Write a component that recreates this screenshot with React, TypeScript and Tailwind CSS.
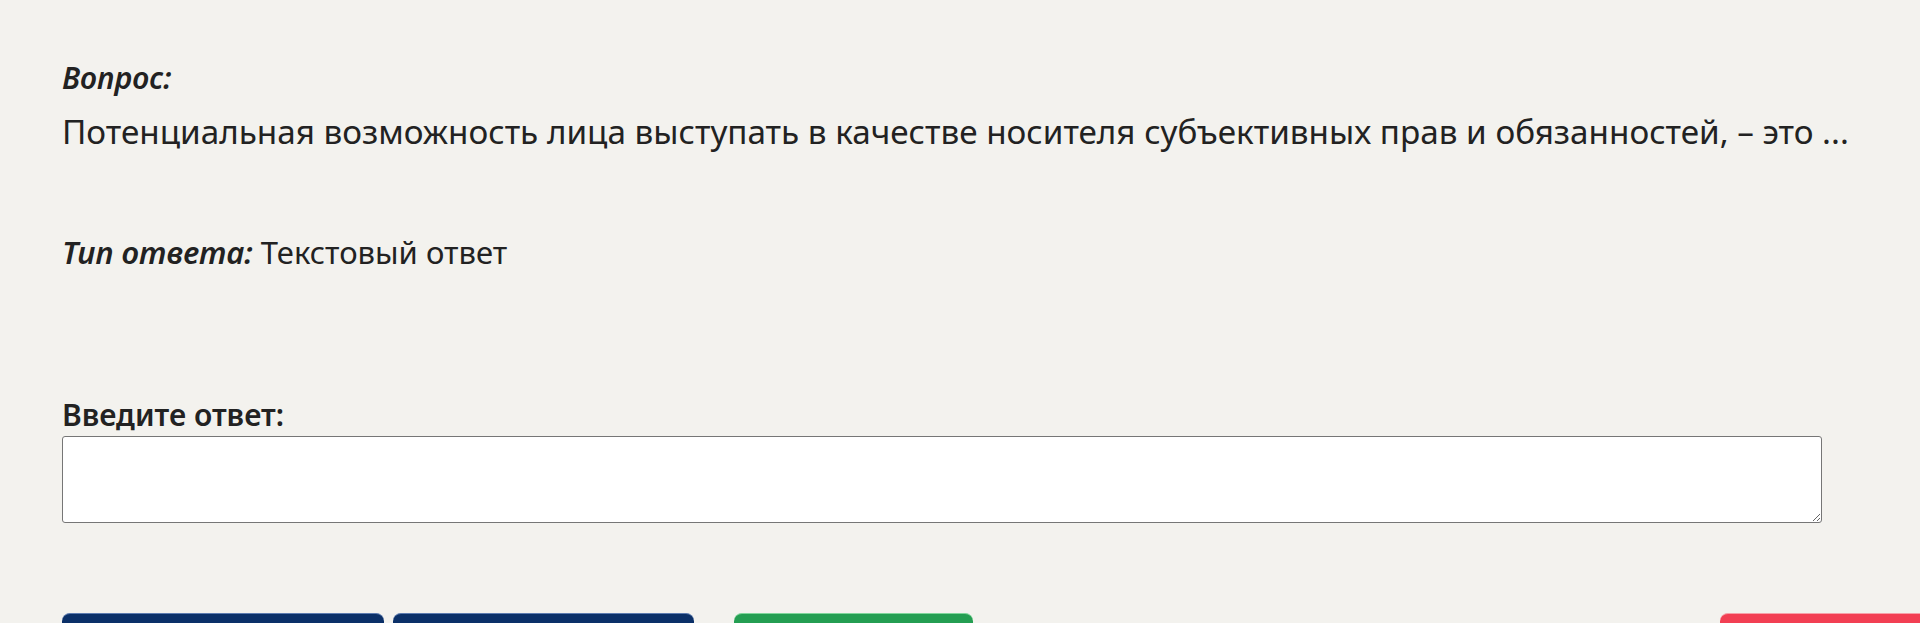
import { useState } from 'react'

export default function App() {
  const [answer, setAnswer] = useState('')

  return (
    <div className="min-h-screen overflow-hidden bg-[#f3f2ee] text-[#222] font-['Noto_Sans',sans-serif]">
      <div className="pl-[62px] pt-[58px]">
        {/* Question block */}
        <div className="text-[30px] leading-[40px] font-semibold italic">Вопрос:</div>
        <p className="mt-[13px] text-[33.25px] leading-[40px] whitespace-nowrap">
          Потенциальная возможность лица выступать в качестве носителя субъективных прав и обязанностей, – это ...
        </p>

        <div className="mt-[81px] text-[31px] leading-[40px]">
          <span className="font-semibold italic">Тип ответа:</span> Текстовый ответ
        </div>

        {/* Answer input */}
        <label className="mt-[125px] block text-[30px] leading-[36px] font-semibold">Введите ответ:</label>
        <textarea
          value={answer}
          onChange={(e) => setAnswer(e.target.value)}
          className="mt-[3px] block h-[87px] w-[1760px] rounded-[3px] border border-[#767676] bg-white px-2 py-1 text-[24px] outline-none"
        />

        {/* Navigation buttons */}
        <div className="mt-[90px] flex items-start">
          <button
            aria-label="Предыдущий вопрос"
            className="h-[52px] w-[322px] rounded-t-[8px] border-t border-[#5d7cb0] bg-[#0b3068]"
          />
          <button
            aria-label="Следующий вопрос"
            className="ml-[9px] h-[52px] w-[301px] rounded-t-[8px] border-t border-[#5d7cb0] bg-[#0b3068]"
          />
          <button
            aria-label="Ответить"
            className="ml-[40px] h-[52px] w-[239px] rounded-t-[8px] border-t border-[#7fd69b] bg-[#249e52]"
          />
          <button
            aria-label="Завершить тестирование"
            className="ml-auto -mr-[40px] h-[52px] w-[240px] shrink-0 rounded-t-[8px] border-t border-[#f7a0a8] bg-[#f23f53]"
          />
        </div>
      </div>
    </div>
  )
}
